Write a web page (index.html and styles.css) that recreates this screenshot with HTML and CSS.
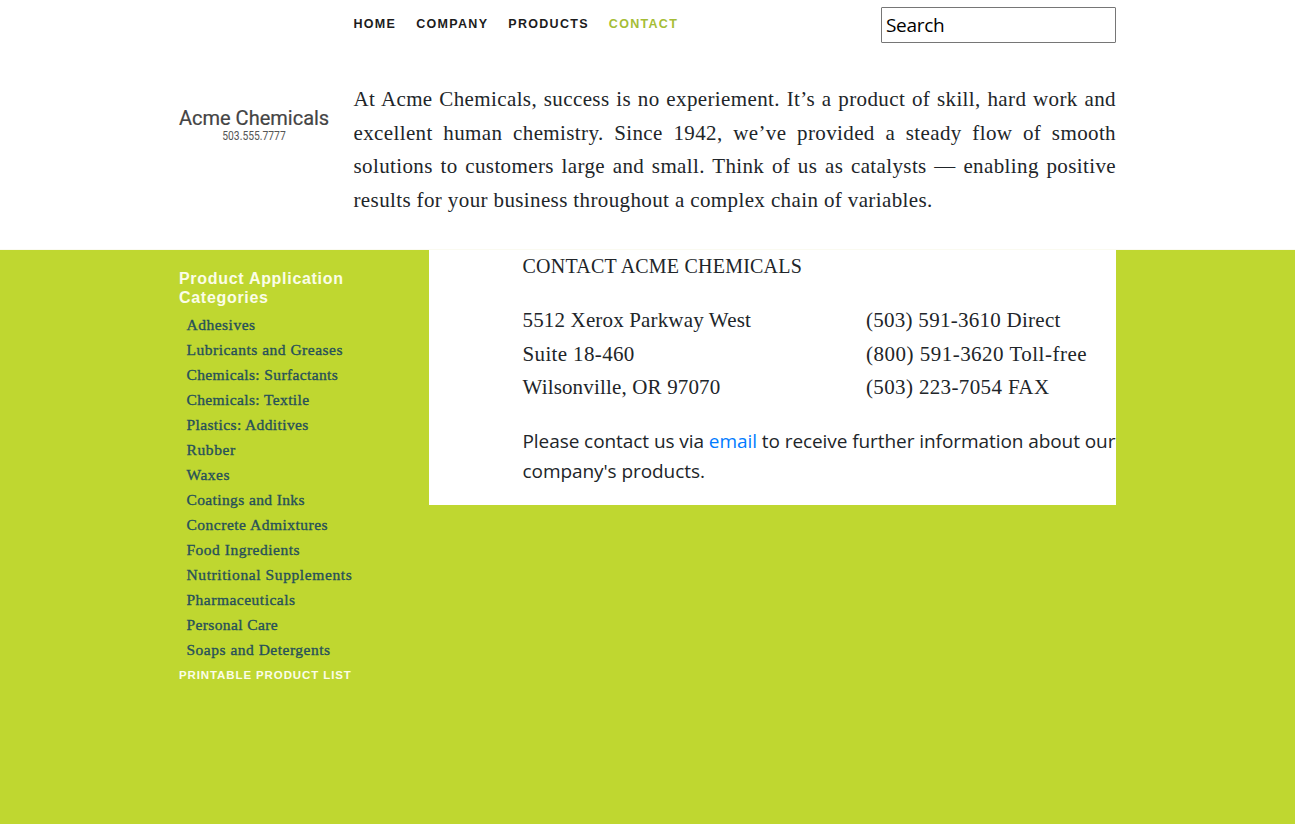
FILE: index.html
```
<!DOCTYPE html>
<html lang="en">
<head>
<meta charset="utf-8">
<title>Acme Chemicals</title>
<link rel="stylesheet" href="styles.css">
</head>
<body>
<header class="header">
  <div class="container header-grid">
    <div class="brand">
      <div class="brand-name">Acme Chemicals</div>
      <div class="brand-phone">503.555.7777</div>
    </div>
    <div class="header-main">
      <div class="topbar">
        <nav class="nav">
          <a class="nav-link">HOME</a>
          <a class="nav-link">COMPANY</a>
          <a class="nav-link">PRODUCTS</a>
          <a class="nav-link active">CONTACT</a>
        </nav>
        <input class="search" type="text" value="Search">
      </div>
      <p class="intro">
        <span class="line">At Acme Chemicals, success is no experiement. It’s a product of skill, hard work and</span>
        <span class="line">excellent human chemistry. Since 1942, we’ve provided a steady flow of smooth</span>
        <span class="line">solutions to customers large and small. Think of us as catalysts — enabling positive</span>
        <span class="line last">results for your business throughout a complex chain of variables.</span>
      </p>
    </div>
  </div>
</header>
<main class="container body-grid">
  <aside class="sidebar">
    <h2 class="sidebar-title">Product Application<br>Categories</h2>
    <ul class="categories">
      <li>Adhesives</li>
      <li>Lubricants and Greases</li>
      <li class="tight">Chemicals: Surfactants</li>
      <li class="tight">Chemicals: Textile</li>
      <li class="tight">Plastics: Additives</li>
      <li class="wide">Rubber</li>
      <li>Waxes</li>
      <li class="tight">Coatings and Inks</li>
      <li>Concrete Admixtures</li>
      <li>Food Ingredients</li>
      <li class="wide">Nutritional Supplements</li>
      <li>Pharmaceuticals</li>
      <li class="tight">Personal Care</li>
      <li>Soaps and Detergents</li>
    </ul>
    <a class="printable">PRINTABLE PRODUCT LIST</a>
  </aside>
  <section class="content">
    <h1 class="content-title">CONTACT ACME CHEMICALS</h1>
    <div class="details">
      <div class="address">5512 Xerox Parkway West<br><span class="mid">Suite 18-460</span><br>Wilsonville, OR 97070</div>
      <div class="phones"><span class="direct">(503) 591-3610 Direct</span><br><span class="toll-free">(800) 591-3620 Toll-free</span><br><span class="mid">(503) 223-7054 FAX</span></div>
    </div>
    <p class="note">Please contact us via <a class="email">email</a> to receive further information about our<br>company's products.</p>
  </section>
</main>
</body>
</html>
```

FILE: styles.css
```
* { box-sizing: border-box; }
body {
  margin: 0;
  min-height: 824px;
  background: #bfd730;
  color: #212529;
  font-family: "Open Sans", sans-serif;
}
.container { width: 937px; margin: 0 auto; }
.header { height: 250px; background: #fff; border-bottom: 1px solid #fafaf0; }
.header-grid { display: grid; grid-template-columns: 174.5px 762.5px; }
.brand {
  width: 150px;
  padding-top: 106px;
  text-align: center;
  color: #444;
  font-family: Roboto, sans-serif;
  -webkit-text-stroke: .2px #444;
}
.brand-name { font-size: 20px; line-height: 24px; white-space: nowrap; }
.brand-phone { font-size: 12px; line-height: 12px; transform: scaleX(.86); color: #555; -webkit-text-stroke: 0; }
.topbar { display: flex; justify-content: space-between; height: 83px; padding-top: 7px; }
.nav {
  display: flex;
  gap: 20px;
  padding-top: 9px;
  font: bold 12.5px/17px "Liberation Sans", sans-serif;
  letter-spacing: 1.3px;
  color: #1c1c1c;
}
.active { color: #a5bd36; }
.search {
  width: 235px;
  height: 36px;
  padding: 1px 4px 2px;
  border: 1px solid #767676;
  border-radius: 1px;
  font: 19px "Open Sans", sans-serif;
  letter-spacing: -.3px;
  color: #000;
}
.intro { margin: 0; font: 21px/33.6px "Liberation Serif", serif; }
.line { display: block; white-space: nowrap; letter-spacing: .38px; text-align: justify; text-align-last: justify; }
.last { text-align-last: left; }
.body-grid { display: grid; grid-template-columns: 250px 687px; align-items: start; }
.sidebar { padding-top: 19px; }
.sidebar-title {
  margin: 0 0 5px;
  font: bold 16px/19px "Liberation Sans", sans-serif;
  letter-spacing: .7px;
  color: #fbfde8;
}
.categories {
  margin: 0;
  padding: 0 0 0 7.5px;
  list-style: none;
  font: 15.5px/25px "Liberation Serif", serif;
  letter-spacing: .5px;
  color: #27505a;
  -webkit-text-stroke: .35px #27505a;
}
.categories .wide { letter-spacing: .6px; }
.categories .tight { letter-spacing: .38px; }
.printable {
  display: block;
  padding-top: 1px;
  font: bold 11.5px/24px "Liberation Sans", sans-serif;
  letter-spacing: .89px;
  color: #fbfde8;
}
.content { height: 255px; padding-left: 93.5px; background: #fff; white-space: nowrap; }
.content-title { margin: 0; font: 20px/33.6px "Liberation Serif", serif; letter-spacing: .22px; }
.details {
  display: grid;
  grid-template-columns: 343.5px 250px;
  padding-top: 20.5px;
  font: 21px/33.6px "Liberation Serif", serif;
  letter-spacing: .16px;
}
.mid { letter-spacing: .36px; }
.direct { letter-spacing: .27px; }
.toll-free { letter-spacing: .49px; }
.note { margin: 21px 0 0; font-size: 19px; line-height: 30px; letter-spacing: -.07px; }
.email { color: #007bff; }
```
